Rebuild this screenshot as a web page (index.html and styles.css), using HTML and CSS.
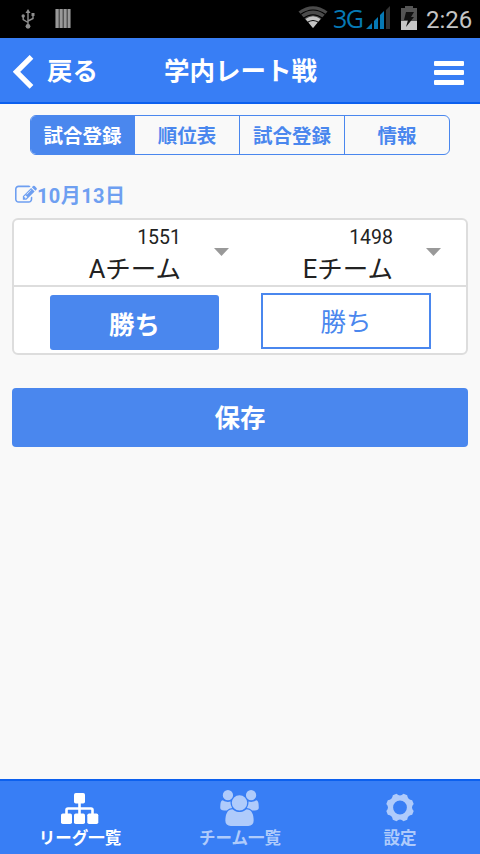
FILE: index.html
```html
<!DOCTYPE html>
<html lang="ja">
<head>
<meta charset="utf-8">
<title>学内レート戦</title>
<link rel="stylesheet" href="styles.css">
</head>
<body>
<div class="status">
  <svg class="usb" width="14" height="20" viewBox="0 0 14 20" fill="none" stroke="#8e8e8e" stroke-width="1.4"><path d="M7 3v13M7 13.500l-4.800-3v-3M7 12l5-2.500v-3"/><path d="M7 0l2.500 4h-5zM10.500 4h3v3h-3z" fill="#8e8e8e" stroke="none"/><circle cx="2.200" cy="7" r="1.700" fill="#8e8e8e" stroke="none"/><circle cx="7" cy="17.300" r="2.400" fill="#8e8e8e" stroke="none"/></svg>
  <svg class="bars" width="16" height="19" viewBox="0 0 16 19"><path fill="#555" d="M0 0h16v19H0z"/><path fill="#999" d="M1 0h2.500v19H1zM5 0h2.500v19H5zM9 0h2.500v19H9zM13 0h2v19h-2z"/></svg>
  <svg class="wifi" width="30" height="22" viewBox="0 0 30 22"><path fill="#4b4b4b" d="M0.500 5.500Q15-5 29.500 5.500L15 22z"/><path fill="#c4c4c4" d="M7.500 13Q15 7.500 22.500 13L15 22z"/><path d="M2.500 8.500Q15-.500 27.500 8.500M5 12.500Q15 5 25 12.500M8.500 17Q15 12 21.500 17" fill="none" stroke="#000" stroke-width="1.100"/></svg>
  <span class="net">3G</span>
  <svg class="signal" width="25" height="23" viewBox="0 0 25 23"><path fill="#0679b4" d="M0 23l6-6v6zM8 15l4-4v12H8zM14 9l4-4v18h-4z"/><path fill="#333" d="M20 4l4-4v23h-4z"/></svg>
  <svg class="battery" width="16" height="24" viewBox="0 0 16 24"><path fill="#555" d="M4 0h8v2h4v22H0V2h4z"/><path fill="#c8c8c8" d="M0 15h16v9H0z"/><path fill="#111" d="M5 6h8l-3 5h3L5 21l2-7H3z"/></svg>
  <span class="clock">2:26</span>
</div>
<header class="header">
  <a class="back"><svg width="21" height="34" viewBox="0 0 21 34"><path d="M18.500 1.800L3.500 16.800l15 15" fill="none" stroke="#fff" stroke-width="5.200"/></svg><span>戻る</span></a>
  <h1 class="title">学内レート戦</h1>
  <div class="menu"><i></i><i></i><i></i></div>
</header>
<main class="main">
  <nav class="tabs"><a class="tab on">試合登録</a><a class="tab">順位表</a><a class="tab">試合登録</a><a class="tab">情報</a></nav>
  <div class="date"><svg width="22" height="22" viewBox="0 0 1792 1792" fill="currentColor"><path d="M888 1184l116-116-152-152-116 116v56h96v96h56zm440-720q-16-16-33 1l-350 350q-17 17-1 33t33-1l350-350q17-17 1-33zm80 594v190q0 119-84.500 203.500t-203.500 84.500h-832q-119 0-203.500-84.500t-84.500-203.500v-832q0-119 84.500-203.500t203.500-84.500h832q63 0 117 25 15 7 18 23 3 17-9 29l-49 49q-14 14-32 8-23-6-45-6h-832q-66 0-113 47t-47 113v832q0 66 47 113t113 47h832q66 0 113-47t47-113v-126q0-13 9-22l64-64q15-15 35-7t20 29zm-96-738l288 288-672 672h-288v-288zm444 132l-92 92-288-288 92-92q28-28 68-28t68 28l152 152q28 28 28 68t-28 68z"/></svg><span>10月13日</span></div>
  <section class="card">
    <div class="teams">
      <div class="team"><div class="names"><span class="rate">1551</span><span class="name">Aチーム</span></div><i class="caret"></i></div>
      <div class="team"><div class="names"><span class="rate">1498</span><span class="name">Eチーム</span></div><i class="caret"></i></div>
    </div>
    <div class="wins"><button class="win filled">勝ち</button><button class="win outline">勝ち</button></div>
  </section>
  <button class="save">保存</button>
</main>
<footer class="footer">
  <a class="item on"><svg width="39" height="36" viewBox="0 0 39 36"><g fill="#fff"><rect x="14" y="3" width="11" height="10.500" rx="1.800"/><rect x="1" y="23.500" width="11" height="10.500" rx="1.800"/><rect x="14" y="23.500" width="11" height="10.500" rx="1.800"/><rect x="27.300" y="23.500" width="11" height="10.500" rx="1.800"/></g><path d="M19.500 12v13M6.500 25v-5q0-1.500 1.500-1.500h23q1.500 0 1.500 1.500v5" fill="none" stroke="#fff" stroke-width="2.600"/></svg><span>リーグ一覧</span></a>
  <a class="item"><svg width="39" height="36" viewBox="0 0 1920 1792" fill="currentColor"><path d="M593 896q-162 5-265 128h-134q-82 0-138-40.500t-56-118.500q0-353 124-353 6 0 43.500 21t97.500 42.500 119 21.500q67 0 133-23-5 37-5 66 0 139 81 256zm1071 637q0 120-73 189.500t-194 69.500h-874q-121 0-194-69.500t-73-189.500q0-53 3.500-103.500t14-109 26.500-108.500 43-97.500 62-81 85.500-53.500 111.500-20q10 0 43 21.500t73 48 107 48 135 21.500 135-21.500 107-48 73-48 43-21.500q61 0 111.500 20t85.500 53.500 62 81 43 97.500 26.500 108.500 14 109 3.500 103.500zm-1024-1277q0 106-75 181t-181 75-181-75-75-181 75-181 181-75 181 75 75 181zm704 384q0 159-112.500 271.500t-271.500 112.500-271.500-112.500-112.500-271.500 112.500-271.500 271.500-112.500 271.500 112.500 112.500 271.500zm576 225q0 78-56 118.500t-138 40.500h-134q-103-123-265-128 81-117 81-256 0-29-5-66 66 23 133 23 59 0 119-21.500t97.500-42.500 43.500-21q124 0 124 353zm-128-609q0 106-75 181t-181 75-181-75-75-181 75-181 181-75 181 75 75 181z"/></svg><span>チーム一覧</span></a>
  <a class="item"><svg class="gear" width="36" height="36" viewBox="-18 -17.500 36 36" fill="currentColor" fill-rule="evenodd"><path d="M13.700 3.500L12.200 7.200Q7.600 7.600 7.200 12.200L3.500 13.700Q0 10.300-3.500 13.700L-7.200 12.200Q-7.600 7.600-12.200 7.200L-13.700 3.500Q-10.300 0-13.700-3.500L-12.200-7.200Q-7.600-7.600-7.200-12.200L-3.500-13.700Q0-10.300 3.500-13.700L7.200-12.200Q7.600-7.600 12.200-7.200L13.700-3.500Q10.300 0 13.700 3.500zM6.900 0A6.900 6.900 0 1 0-6.900 0A6.900 6.900 0 1 0 6.900 0z"/></svg><span>設定</span></a>
</footer>
</body>
</html>
```
FILE: styles.css
```css
* { box-sizing: border-box; }
body {
  margin: 0;
  width: 480px;
  height: 854px;
  display: flex;
  flex-direction: column;
  overflow: hidden;
  background: #f9f9f9;
  color: #222;
  font-family: Roboto, "Noto Sans CJK JP", sans-serif;
}
svg { display: block; flex: none; }
button { font-family: inherit; padding: 0; margin: 0; }

.status { height: 38px; background: #000; display: flex; align-items: flex-start; flex: none; }
.usb { margin: 9px 0 0 21px; }
.bars { margin: 9px 0 0 20px; }
.wifi { margin: 6px 0 0 227px; }
.net { margin: 3px 0 0 5px; width: 30px; font: 25px/30px "Open Sans", sans-serif; letter-spacing: -1.500px; color: #0679b4; }
.signal { margin: 6px 0 0 3px; }
.battery { margin: 6px 0 0 10px; }
.clock { margin: 4px 0 0 9px; font-size: 24px; line-height: 32px; color: #c4c4c4; white-space: nowrap; }

.header {
  height: 66px;
  flex: none;
  display: grid;
  grid-template-columns: 130px 1fr 130px;
  align-items: center;
  padding-bottom: 2px;
  background: #387ef5;
  box-shadow: inset 0 -2px #0c60ee;
  color: #fff;
  font-size: 25.500px;
  font-weight: 700;
}
.back { display: flex; align-items: center; padding-left: 13px; gap: 13px; line-height: 36px; }
.back svg { margin-top: 3px; }
.back span { margin-top: 1px; }
.title { margin: 2px 0 0 1px; font-size: inherit; line-height: 36px; text-align: center; white-space: nowrap; }
.menu { justify-self: end; margin: 5px 16px 0 0; width: 30px; display: grid; gap: 4.500px; }
.menu i { height: 5px; background: #fff; border-radius: 1px; }

.main { flex: 1; padding: 11px 12px 0; }
.tabs {
  margin: 0 18px;
  height: 40px;
  display: grid;
  grid-template-columns: 103px 105px 105px 1fr;
  border: 1px solid #4a87ee;
  border-radius: 6px;
  overflow: hidden;
  color: #4a87ee;
  font-size: 19.500px;
  font-weight: 700;
  line-height: 41px;
  text-align: center;
}
.tab + .tab { border-left: 1px solid #4a87ee; }
.tab.on { background: #4a87ee; color: #fff; }
.date {
  display: flex;
  align-items: center;
  height: 30px;
  margin: 25px 0 0 3px;
  color: #6e9ff1;
  font-size: 20px;
  font-weight: 700;
  letter-spacing: .4px;
}
.date span { margin-top: -2px; }
.card {
  margin-top: 8px;
  height: 137px;
  background: #fff;
  border: 2px solid #ddd;
  border-radius: 6px;
}
.teams { height: 67px; display: grid; grid-template-columns: 212px 1fr; border-bottom: 2px solid #ddd; }
.team { display: flex; justify-content: flex-end; padding-top: 3px; }
.team + .team { margin-right: 25px; }
.team:first-child { margin-right: -3px; }
.names { display: flex; flex-direction: column; text-align: right; }
.rate { font-size: 19.500px; line-height: 30px; }
.name { font-size: 25.500px; line-height: 33px; }
.caret { margin: 25px 0 0 33px; width: 15px; height: 8px; background: #999; clip-path: polygon(0 0, 100% 0, 50% 100%); }
.wins { display: flex; padding: 6px 0 0 36px; gap: 42px; }
.win { font-size: 25.500px; line-height: 51px; }
.filled { width: 169px; height: 55px; margin-top: 2px; padding-top: 5px; background: #4a87ee; border: 0; border-radius: 3px; color: #fff; font-weight: 700; }
.outline { width: 170px; height: 56px; padding-top: 2px; background: #fff; border: 2px solid #4a87ee; color: #4a87ee; }
.save {
  display: block;
  width: 456px;
  height: 59px;
  margin-top: 33px;
  padding-bottom: 4px;
  border: 0;
  border-radius: 4px;
  background: #4a87ee;
  color: #fff;
  font-size: 25.500px;
  font-weight: 700;
}

.footer {
  height: 75px;
  flex: none;
  display: grid;
  grid-template-columns: repeat(3, 1fr);
  background: #387ef5;
  box-shadow: inset 0 2px #0c60ee;
}
.item {
  display: flex;
  flex-direction: column;
  align-items: center;
  padding-top: 11px;
  color: #afcbfb;
  font-size: 16.500px;
  font-weight: 700;
  line-height: 26px;
}
.item svg { margin-right: 2px; }
.item .gear { margin-right: 0; }
.item.on { color: #fff; }
```
